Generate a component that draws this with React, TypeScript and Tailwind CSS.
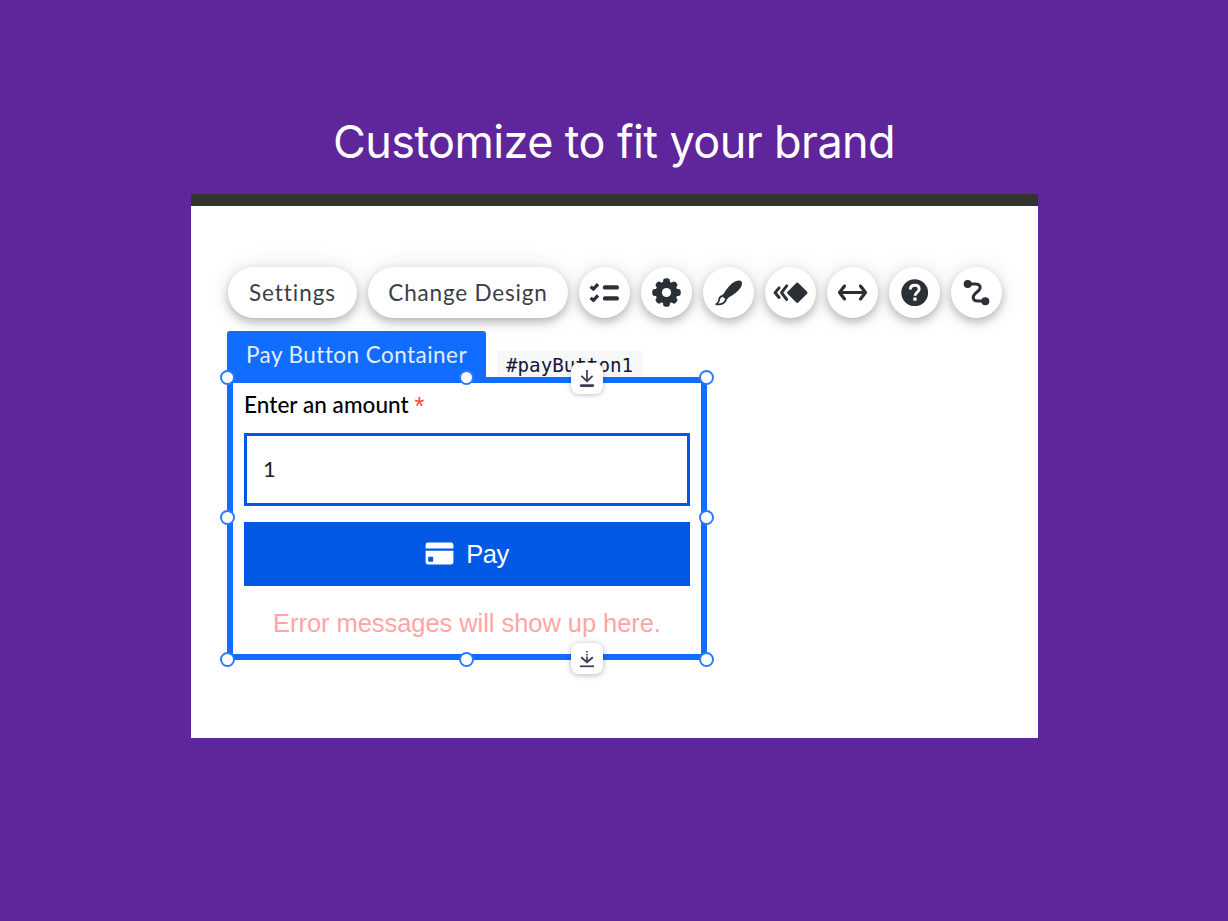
import type { ReactNode } from "react";

const INK = "#2b2f36";

const ChecklistIcon = () => (
  <svg width="32" height="24" viewBox="0 0 32 24" fill="none" stroke={INK}>
    <path
      d="M1.6 5.6 4.4 8.2 9 3.2M1.6 16.8 4.4 19.4 9 14.4"
      strokeWidth="3.2"
      strokeLinejoin="round"
    />
    <path
      d="M16 6.4h11.8M16 17.4h11.8"
      strokeWidth="4.4"
      strokeLinecap="round"
    />
  </svg>
);

const GearIcon = () => (
  <svg width="30" height="30" viewBox="0.5 0.5 30 30">
    <g fill={INK}>
      <circle cx="15" cy="15" r="11" />
      <rect x="11.6" y="0.8" width="6.8" height="28.4" rx="2.6" />
      <rect x="0.8" y="11.6" width="28.4" height="6.8" rx="2.6" />
      <g transform="rotate(45 15 15)">
        <rect x="11.8" y="1.2" width="6.4" height="27.6" rx="2.6" />
        <rect x="1.2" y="11.8" width="27.6" height="6.4" rx="2.6" />
      </g>
    </g>
    <circle cx="15" cy="15" r="4.6" fill="#fff" />
  </svg>
);

const BrushIcon = () => (
  <svg width="30" height="28" viewBox="0 0 30 28">
    <path
      d="M9.8 14.6C12.5 9.9 17 4.6 21 2.6c2.4-1.2 5-1.6 6.3-.4 1.3 1.3.8 3.8-.6 6.2-2.6 4-7.2 7.4-12.4 10z"
      fill={INK}
    />
    <path
      d="M8.6 16.8c-2.2.4-3.2 1.8-3.4 3.7-.1 1.9-.9 3.2-2.9 4.8 4 .4 8.2-.6 9.6-4.4l-.2-1.8z"
      fill="#fff"
      stroke={INK}
      strokeWidth="1.8"
      strokeLinejoin="round"
    />
    <path d="m8.2 15.4 2.4-1.2 4.2 4.6-2 1.6z" fill={INK} />
  </svg>
);

const AnimationIcon = () => (
  <svg width="36" height="24" viewBox="0.7 0.3 36 24">
    <path
      d="m6.8 7.2-4 4.8 4 4.8M14.4 5.2 9.2 12l5.2 6.8"
      fill="none"
      stroke={INK}
      strokeWidth="2.9"
      strokeLinecap="round"
      strokeLinejoin="round"
    />
    <path
      d="M25 3.2 33.8 12 25 20.8 16.2 12z"
      fill={INK}
      stroke={INK}
      strokeWidth="2.8"
      strokeLinejoin="round"
    />
  </svg>
);

const StretchIcon = () => (
  <svg
    width="32"
    height="20"
    viewBox="0.5 0.5 32 20"
    fill="none"
    stroke={INK}
    strokeWidth="3.2"
    strokeLinecap="round"
    strokeLinejoin="round"
  >
    <path d="M3 10h26M8 3.6 3 10l5 6.4M24 3.6 29 10l-5 6.4" />
  </svg>
);

const HelpIcon = () => (
  <svg width="28" height="28" viewBox="0.3 0.3 28 28">
    <circle cx="14" cy="14" r="13.4" fill={INK} />
    <path
      d="M9.6 10.8c0-2.5 1.8-4.2 4.5-4.2s4.4 1.6 4.4 3.8c0 3.3-4.2 3.2-4.2 6.7"
      fill="none"
      stroke="#fff"
      strokeWidth="2.9"
    />
    <rect x="12.6" y="18.8" width="3.3" height="3.2" fill="#fff" />
  </svg>
);

const ConnectIcon = () => (
  <svg width="28" height="28" viewBox="0.5 0.3 28 28">
    <path
      d="M5 5.2h7.4c6 0 6.4 4.2 3.4 7l-3.2 2.8c-3.2 3.2-2.2 7.4 2.6 7.4H23"
      fill="none"
      stroke={INK}
      strokeWidth="3"
    />
    <circle cx="5.2" cy="5.2" r="4" fill={INK} />
    <circle cx="22.8" cy="22.6" r="4" fill={INK} />
  </svg>
);

const CardIcon = () => (
  <svg width="29" height="24" viewBox="0 0 29 24">
    <path
      d="M3 .6h23a2.4 2.4 0 0 1 2.4 2.4v3.6H.6V3A2.4 2.4 0 0 1 3 .6zM.6 8.8h27.8v11.4a2.4 2.4 0 0 1-2.4 2.4H3a2.4 2.4 0 0 1-2.4-2.4z"
      fill="#fff"
    />
    <rect x="3.2" y="14.8" width="5" height="5" rx="1" fill="#0058e4" />
  </svg>
);

const PinIcon = ({ dashed }: { dashed?: boolean }) => (
  <svg width="16" height="18" viewBox="0 0 16 18" fill="none" stroke="#3a3b55">
    {dashed ? (
      <>
        <path d="M8 1v1.6M8 4v1.6M8 6.6v5" strokeWidth="1.7" />
        <path d="m2.2 7.2 5.8 5 5.8-5" strokeWidth="1.9" />
        <path d="M1 16.3h14" strokeWidth="1.7" />
      </>
    ) : (
      <>
        <path d="M8 0v11" strokeWidth="1.7" />
        <path d="M2.4 5.8 8 11.2l5.6-5.4" strokeWidth="1.7" />
        <path d="M2.2 15.6h11.6" strokeWidth="2.8" strokeLinecap="round" />
      </>
    )}
  </svg>
);

const Pill = ({ children, width }: { children: ReactNode; width: string }) => (
  <button
    className={`${width} flex h-[51px] items-center justify-center rounded-full bg-white whitespace-nowrap font-['Lato'] text-[22.5px] text-[#3a3e47] shadow-[0_4px_10px_rgba(0,0,0,0.26),0_0_26px_rgba(0,0,0,0.09)]`}
  >
    {children}
  </button>
);

const Handle = ({ place }: { place: string }) => (
  <span
    className={`${place} absolute h-[15px] w-[15px] rounded-full border-2 border-[#2a7bff] bg-white`}
  />
);

const actions = [
  { name: "Checklist", icon: <ChecklistIcon /> },
  { name: "Layout", icon: <GearIcon /> },
  { name: "Design", icon: <BrushIcon /> },
  { name: "Animation", icon: <AnimationIcon /> },
  { name: "Stretch", icon: <StretchIcon /> },
  { name: "Help", icon: <HelpIcon /> },
  { name: "Connect", icon: <ConnectIcon /> },
];

const Toolbar = () => {
  return (
    <div className="flex gap-[11px] pl-[37px] pt-[61px]">
      <Pill width="w-[129px]">
        <span className="tracking-[0.95px]">Settings</span>
      </Pill>
      <Pill width="w-[200px]">
        <span className="tracking-[0.82px]">Change Design</span>
      </Pill>
      {actions.map((action) => (
        <button
          key={action.name}
          aria-label={action.name}
          className="flex h-[51px] w-[51px] items-center justify-center rounded-full bg-white shadow-[0_4px_10px_rgba(0,0,0,0.26),0_0_26px_rgba(0,0,0,0.09)]"
        >
          {action.icon}
        </button>
      ))}
    </div>
  );
};

const PayContainer = () => {
  return (
    <div className="ml-9 mt-[13px] w-[480px]">
      <div className="flex h-[46px] items-end">
        <div className="flex h-[46px] w-[259px] items-center justify-center rounded-t-[3px] bg-[#116dff] pt-px whitespace-nowrap font-['Lato'] text-[22.5px] tracking-[0.45px] text-[#e3edff]">
          Pay Button Container
        </div>
        <div className="ml-[11px] h-[26px] w-[145px] bg-[#f6f8f8] pl-[9px] pt-[2px] font-['DejaVu_Sans_Mono'] text-[19.2px] leading-[26px] text-[#15153a]">
          #payButton1
        </div>
      </div>
      <div className="relative h-[283px] border-[6px] border-[#116dff] px-[11px] pt-2">
        <label
          htmlFor="amount"
          className="block h-[42px] whitespace-nowrap font-['Lato'] text-[22.5px] font-medium leading-7 tracking-[0.06px] text-black"
        >
          Enter an amount{" "}
          <span className="inline-block h-5 align-top font-['Liberation_Sans'] text-[25px] leading-[30px] text-[#ff4040]">
            *
          </span>
        </label>
        <input
          id="amount"
          defaultValue="1"
          className="block h-[73px] w-[446px] border-[3px] border-[#0058e4] px-4 pb-[3px] font-['Lato'] text-[22px] text-[#222] outline-none"
        />
        <button className="mt-4 flex h-16 w-[446px] items-center justify-center gap-3 bg-[#0058e4] font-['Liberation_Sans'] text-[25.5px] tracking-[-0.5px] text-white">
          <CardIcon />
          Pay
        </button>
        <p className="mt-[22px] w-[446px] whitespace-nowrap text-center font-['Liberation_Sans'] text-[25.5px] leading-[30px] tracking-[-0.06px] text-[#ffa5a5]">
          Error messages will show up here.
        </p>

        <Handle place="-left-[13px] -top-[13px]" />
        <Handle place="left-[226px] -top-[13px]" />
        <Handle place="-right-[13px] -top-[13px]" />
        <Handle place="-left-[13px] top-[127px]" />
        <Handle place="-right-[13px] top-[127px]" />
        <Handle place="-left-[13px] top-[269px]" />
        <Handle place="left-[226px] top-[269px]" />
        <Handle place="-right-[13px] top-[269px]" />
        <span className="absolute left-[338px] -top-[20px] flex h-[31px] w-8 items-center justify-center rounded-lg bg-white shadow-[0_1px_5px_rgba(0,0,40,0.25)]">
          <PinIcon />
        </span>
        <span className="absolute left-[338px] top-[260px] flex h-[31px] w-8 items-center justify-center rounded-lg bg-white shadow-[0_1px_6px_rgba(0,0,40,0.3)]">
          <PinIcon dashed />
        </span>
      </div>
    </div>
  );
};

const App = () => {
  return (
    <main className="flex h-[921px] w-[1228px] flex-col items-center overflow-hidden bg-[#5f259b]">
      <h1 className="mt-[112px] h-[82px] whitespace-nowrap font-['Inter'] text-[45px] leading-[60px] tracking-[-0.6px] text-white">
        Customize to fit your brand
      </h1>
      <section className="ml-px h-[544px] w-[847px] border-t-[12px] border-[#333] bg-white">
        <Toolbar />
        <PayContainer />
      </section>
    </main>
  );
};

export default App;
